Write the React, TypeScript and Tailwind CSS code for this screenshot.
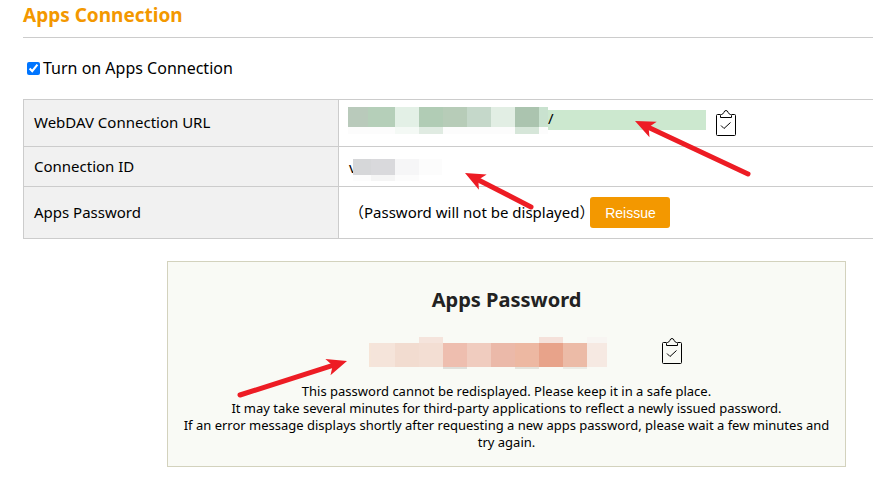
import { useState } from "react";

type Tile = [x: number, y: number, width: number, height: number, color: string];

const urlTiles: Tile[] = [
  [0, 0, 20, 20, "#b9cabb"],
  [20, 0, 27, 20, "#b5cfb9"],
  [47, 0, 24, 20, "#e3f0e6"],
  [71, 0, 24, 20, "#b1ccb5"],
  [95, 0, 24, 20, "#b7ccb8"],
  [119, 0, 24, 20, "#c5d8ca"],
  [143, 0, 24, 20, "#e2eee4"],
  [167, 0, 24, 20, "#abc4af"],
  [191, 0, 9, 20, "#c9e2cf"],
  [0, 20, 200, 7, "#fcfcfc"],
  [47, 20, 24, 7, "#f4f9f5"],
  [71, 20, 24, 7, "#e0ebe2"],
  [167, 20, 24, 7, "#d6e6d9"],
];

const idTiles: Tile[] = [
  [0, 0, 18, 16, "#d6d7d9"],
  [18, 0, 24, 16, "#d9d9dc"],
  [42, 0, 24, 16, "#f6f6f7"],
  [66, 0, 23, 16, "#fcfcfc"],
  [0, 16, 18, 6, "#fcfcfc"],
  [18, 16, 24, 6, "#f5f5f5"],
  [42, 16, 24, 6, "#fcfcfc"],
];

const passwordTiles: Tile[] = [
  [0, 6, 2, 24, "#f6e5d8"],
  [2, 6, 24, 24, "#f5e4da"],
  [26, 6, 24, 24, "#f2dcd0"],
  [50, 6, 24, 24, "#f3ded3"],
  [74, 6, 24, 24, "#eebeaf"],
  [98, 6, 24, 24, "#f0ccbf"],
  [122, 6, 24, 24, "#ebb9a9"],
  [146, 6, 24, 24, "#edb8a2"],
  [170, 6, 24, 24, "#e8a38a"],
  [194, 6, 24, 24, "#ecbba7"],
  [218, 6, 20, 24, "#f6e9e2"],
  [50, 0, 24, 6, "#f5e4dc"],
  [170, 0, 24, 6, "#f5e1da"],
  [218, 0, 20, 6, "#f8f5f2"],
  [74, 30, 24, 2, "#dfdfda"],
  [146, 30, 24, 2, "#e4e3dc"],
  [194, 30, 24, 2, "#ebebe5"],
];

function Mosaic({ tiles, width, height }: { tiles: Tile[]; width: number; height: number }) {
  return (
    <svg width={width} height={height} shapeRendering="crispEdges" className="block shrink-0" aria-hidden="true">
      {tiles.map(([x, y, w, h, color], i) => (
        <rect key={i} x={x} y={y} width={w} height={h} fill={color} />
      ))}
    </svg>
  );
}

function CopyButton({ label }: { label: string }) {
  return (
    <button type="button" aria-label={label} className="block shrink-0 cursor-pointer">
      <svg width="20" height="26" viewBox="0 0 20 26" fill="none" stroke="#000" className="block">
        <path d="M4.500 4.500H1.500a1 1 0 0 0-1 1v19a1 1 0 0 0 1 1h17a1 1 0 0 0 1-1v-19a1 1 0 0 0-1-1H15.500" />
        <path d="M4.500 7.500V5.500Q4.500 4.500 5.500 4.500Q7 4.300 7.800 2.500Q8.500 .5 10 .5T12.200 2.500Q13 4.300 14.500 4.500Q15.500 4.500 15.500 5.500V7.500Z" />
        <path d="M5 15.500L8 18.500L14.500 12.500" />
      </svg>
    </button>
  );
}

function Arrow({ tip, tail }: { tip: [number, number]; tail: [number, number] }) {
  const dx = tail[0] - tip[0];
  const dy = tail[1] - tip[1];
  const length = Math.hypot(dx, dy);
  const angle = (Math.atan2(dy, dx) * 180) / Math.PI;
  return (
    <g transform={`translate(${tip[0]} ${tip[1]}) rotate(${angle})`}>
      <path d="M0 0L20 -8.500L15 0L20 8.500Z" fill="#ed1c24" />
      <path d={`M14 0H${length}`} stroke="#ed1c24" strokeWidth="5" strokeLinecap="round" />
    </g>
  );
}

export default function App() {
  const [enabled, setEnabled] = useState(true);
  const th = "w-[315px] border border-[#ccc] bg-[#f1f1f1] px-2.5 pb-0.5 text-left font-normal";
  const td = "border-y border-[#ccc] px-2.5";

  return (
    <main className="relative overflow-hidden bg-white pb-8 pl-[23px] font-['Noto_Sans','Noto_Sans_CJK_JP',sans-serif] text-[15px] leading-5 text-black">
      <h1 className="border-b border-[#ccc] pt-0.5 pb-2 text-[19px] leading-[27px] font-bold text-[#f39800]">
        Apps Connection
      </h1>

      <label className="mt-5 flex items-center gap-[3px] pl-1 text-base leading-5">
        <input
          type="checkbox"
          checked={enabled}
          onChange={(e) => setEnabled(e.target.checked)}
          className="size-[13px] accent-[#0075ff]"
        />
        Turn on Apps Connection
      </label>

      <table className="mt-[21px] w-full border-collapse">
        <tbody>
          <tr className="h-[47px]">
            <th scope="row" className={th}>WebDAV Connection URL</th>
            <td className={td}>
              <div className="-ml-px flex items-center">
                <div className="pb-1.5">
                  <Mosaic tiles={urlTiles} width={200} height={27} />
                </div>
                <div className="mr-2.5 pb-1.5">
                  <div className="h-5 w-[158px] bg-[#cce8cf] leading-4">/</div>
                </div>
                <CopyButton label="Copy WebDAV Connection URL" />
              </div>
            </td>
          </tr>
          <tr className="h-10">
            <th scope="row" className={th}>Connection ID</th>
            <td className={td}>
              <div className="flex items-center">
                <span className="-mr-1 w-2">v</span>
                <div className="pt-1.5">
                  <Mosaic tiles={idTiles} width={89} height={22} />
                </div>
              </div>
            </td>
          </tr>
          <tr className="h-[52px]">
            <th scope="row" className={th}>Apps Password</th>
            <td className={td}>
              <div className="flex items-center">
                <span className="-mr-1 pb-0.5">（Password will not be displayed）</span>
                <button
                  type="button"
                  className="h-[31px] w-20 cursor-pointer rounded-[3px] bg-[#f39800] font-['Liberation_Sans',sans-serif] text-sm text-white"
                >
                  Reissue
                </button>
              </div>
            </td>
          </tr>
        </tbody>
      </table>

      <section className="mt-[22px] mr-[27px] ml-36 border border-[#d3d2bd] bg-[#f9faf5] px-3 pt-6 pb-[15px] text-center">
        <h2 className="text-xl leading-7 font-bold text-[#222]">Apps Password</h2>
        <div className="mt-[23px] flex items-center justify-center gap-[55px] pl-[37px]">
          <Mosaic tiles={passwordTiles} width={238} height={32} />
          <div className="pb-1">
            <CopyButton label="Copy Apps Password" />
          </div>
        </div>
        <p className="mt-3.5 text-[13px] leading-[17px]">
          This password cannot be redisplayed. Please keep it in a safe place.
          <br />
          It may take several minutes for third-party applications to reflect a newly issued password.
          <br />
          If an error message displays shortly after requesting a new apps password, please wait a few minutes and try
          again.
        </p>
      </section>

      <svg className="pointer-events-none absolute top-0 left-0" width="873" height="498" aria-hidden="true">
        <Arrow tip={[635, 121]} tail={[748, 174]} />
        <Arrow tip={[465, 173]} tail={[531, 207]} />
        <Arrow tip={[347, 361]} tail={[240, 395]} />
      </svg>
    </main>
  );
}
